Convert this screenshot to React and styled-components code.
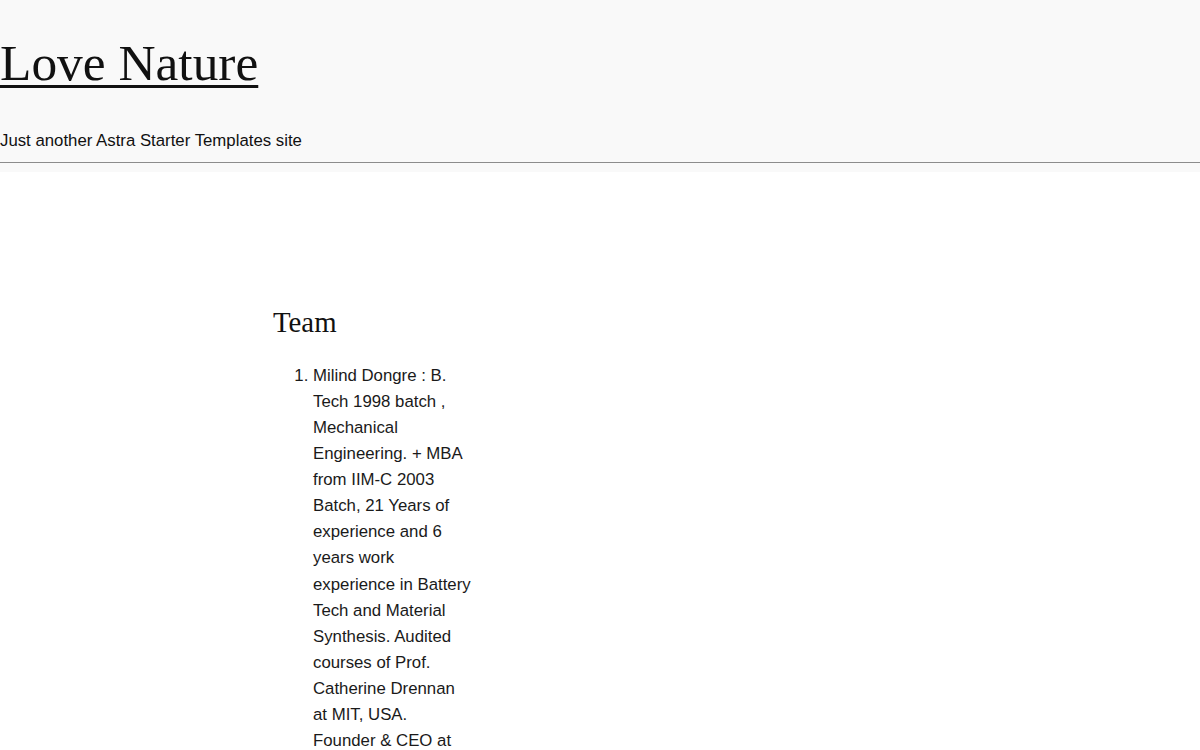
import React from 'react'
import styled, { createGlobalStyle } from 'styled-components'

const GlobalStyle = createGlobalStyle`
body{
    margin: 0;
    background: #fff;
    color: #222;
    font-family: "Liberation Sans", Arial, sans-serif;
}
`

const Header = styled.header`
width: 100%;
background: #f9f9f9;
padding: 34px 0 9px;
`
const SiteTitle = styled.h1`
margin: 0;
font-family: "Liberation Serif", "Times New Roman", serif;
font-weight: 400;
font-size: 51.4px;
line-height: 58px;
`
const TitleLink = styled.a`
color: #111;
text-decoration: underline;
text-decoration-thickness: 3px;
text-underline-offset: 5px;
`
const Tagline = styled.p`
margin: 37px 0 9px;
font-size: 16.8px;
line-height: 24px;
color: #111;
`
const Rule = styled.hr`
margin: 0;
border: 0;
border-top: 1px solid #8c8c8c;
`

const Main = styled.main`
max-width: 654px;
margin: 0 auto;
padding-top: 134px;
`
const Column = styled.section`
width: 200px;
`
const Heading = styled.h2`
margin: 0 0 25px;
font-family: "Liberation Serif", "Times New Roman", serif;
font-weight: 400;
font-size: 28.8px;
line-height: 32px;
color: #111;
`
const List = styled.ol`
margin: 0;
padding-left: 40px;
font-size: 16.8px;
line-height: 26.07px;
color: #1a1a1a;
`

const team = [
    'Milind Dongre : B. Tech 1998 batch , Mechanical Engineering. + MBA from IIM-C 2003 Batch, 21 Years of experience and 6 years work experience in Battery Tech and Material Synthesis. Audited courses of Prof. Catherine Drennan at MIT, USA. Founder & CEO at Love Nature.',
]

const App = () => {
    return (
        <>
            <GlobalStyle />
            <Header>
                <SiteTitle><TitleLink href="#">Love Nature</TitleLink></SiteTitle>
                <Tagline>Just another Astra Starter Templates site</Tagline>
                <Rule />
            </Header>
            <Main>
                <Column>
                    <Heading>Team</Heading>
                    <List>
                        {team.map((member) => <li key={member}>{member}</li>)}
                    </List>
                </Column>
            </Main>
        </>
    )
}

export default App
